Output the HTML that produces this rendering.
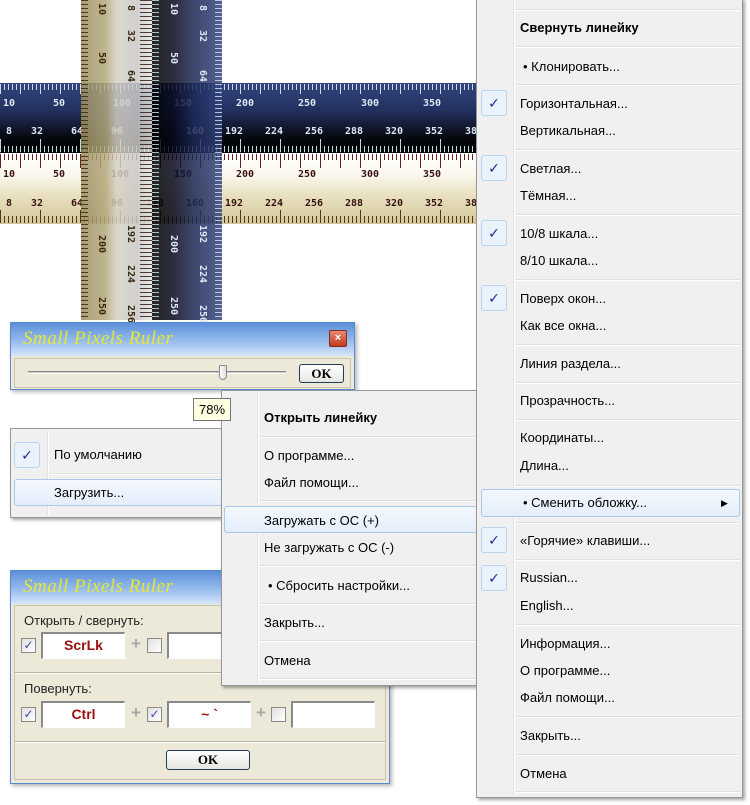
<!DOCTYPE html>
<html><head><meta charset="utf-8"><style>
*{margin:0;padding:0;box-sizing:border-box}
body{width:750px;height:805px;background:#fff;position:relative;overflow:hidden;font-family:"Liberation Sans","DejaVu Sans",sans-serif;font-size:13px;color:#000}
.a{position:absolute}
.menu{position:absolute;background:#f0f0f0;border:1px solid #979797;box-shadow:2px 2px 3px rgba(0,0,0,.35)}
.gut{position:absolute;top:2px;bottom:2px;width:2px;border-left:1px solid #e2e3e3;border-right:1px solid #fff}
.it{position:absolute;white-space:nowrap;line-height:16px}
.sep{position:absolute;height:2px;border-top:1px solid #e0e0e0;border-bottom:1px solid #fff}
.chk{position:absolute;width:26px;height:26px;border:1px solid #b8d4f0;border-radius:3px;background:#eaf2fc;color:#1a2a9a;font-size:14px;text-align:center;line-height:24px}
.hl{position:absolute;height:27px;border:1px solid #a8c8ec;border-radius:3px;background:linear-gradient(#f4f8fd,#e4eefb)}
.num{position:absolute;font-family:"DejaVu Sans Mono",monospace;font-size:10px;font-weight:bold}
.vn{position:absolute;font-family:"DejaVu Sans Mono",monospace;font-size:10px;font-weight:bold;writing-mode:vertical-rl}
.title{position:absolute;left:0;right:0;top:0;height:33px;background:linear-gradient(#5c8fd8,#9cc0ee 60%,#d6e6f8);}
.script{position:absolute;left:12px;top:5px;font-family:"Liberation Serif",serif;font-style:italic;font-size:19px;color:#e6e830;letter-spacing:.5px}
.inp{position:absolute;height:27px;background:#fff;border:1px solid #fff;border-top:2px solid #8a8a8a;border-left:2px solid #8a8a8a;color:#9a1010;font-weight:bold;font-size:14px;text-align:center;line-height:23px}
.cb{position:absolute;width:15px;height:15px;border:1px solid #8a8a8a;background:linear-gradient(135deg,#e0e0e0,#fff);color:#3848a8;font-size:12px;line-height:13px;text-align:center;font-weight:bold}
.plus{position:absolute;color:#a8a8a8;font-weight:bold;font-size:17px}
.btn{position:absolute;border:1px solid #223a5e;border-radius:3px;background:linear-gradient(#fff,#e6e6e0);font-family:"Liberation Serif",serif;font-weight:bold;font-size:13px;text-align:center}
</style></head><body>

<!-- horizontal rulers -->
<div class="a" style="left:0;top:83px;width:476px;height:70px;background:linear-gradient(#33457e,#22305e 40%,#05060c 80%,#000)"></div>
<div class="a" style="left:0;top:84px;width:476px;height:6px;background:repeating-linear-gradient(90deg,#d0d8e8 0 1px,transparent 1px 4px)"></div>
<div class="a" style="left:0;top:84px;width:476px;height:10px;background:repeating-linear-gradient(90deg,#d0d8e8 0 1px,transparent 1px 20px)"></div>
<div class="a" style="left:0;top:146px;width:476px;height:6px;background:repeating-linear-gradient(90deg,#bfe0e0 0 1px,transparent 1px 4px)"></div>
<div class="a" style="left:0;top:139px;width:476px;height:13px;background:repeating-linear-gradient(90deg,#bfe0e0 0 1px,transparent 1px 40px)"></div>
<div class="a" style="left:0;top:153px;width:476px;height:71px;background:linear-gradient(#fff,#fbf8ee 30%,#e8e0c0 60%,#d4c79a)"></div>
<div class="a" style="left:0;top:154px;width:476px;height:6px;background:repeating-linear-gradient(90deg,#6a2020 0 1px,transparent 1px 4px)"></div>
<div class="a" style="left:0;top:154px;width:476px;height:14px;background:repeating-linear-gradient(90deg,#6a2020 0 1px,transparent 1px 20px)"></div>
<div class="a" style="left:0;top:216px;width:476px;height:7px;background:repeating-linear-gradient(90deg,#4a3a10 0 1px,transparent 1px 4px)"></div>
<div class="a" style="left:0;top:210px;width:476px;height:13px;background:repeating-linear-gradient(90deg,#4a3a10 0 1px,transparent 1px 40px)"></div>
<div style="color:#dde6f4">
<span class="num" style="left:3px;top:98px">10</span><span class="num" style="left:53px;top:98px">50</span><span class="num" style="left:113px;top:98px">100</span><span class="num" style="left:174px;top:98px">150</span><span class="num" style="left:236px;top:98px">200</span><span class="num" style="left:298px;top:98px">250</span><span class="num" style="left:361px;top:98px">300</span><span class="num" style="left:423px;top:98px">350</span>
<span class="num" style="left:6px;top:126px">8</span><span class="num" style="left:31px;top:126px">32</span><span class="num" style="left:71px;top:126px">64</span><span class="num" style="left:111px;top:126px">96</span><span class="num" style="left:186px;top:126px">160</span><span class="num" style="left:225px;top:126px">192</span><span class="num" style="left:265px;top:126px">224</span><span class="num" style="left:305px;top:126px">256</span><span class="num" style="left:345px;top:126px">288</span><span class="num" style="left:385px;top:126px">320</span><span class="num" style="left:425px;top:126px">352</span><span class="num" style="left:465px;top:126px">38</span>
</div>
<div style="color:#3a1010">
<span class="num" style="left:3px;top:169px">10</span><span class="num" style="left:53px;top:169px">50</span><span class="num" style="left:111px;top:169px">100</span><span class="num" style="left:174px;top:169px">150</span><span class="num" style="left:236px;top:169px">200</span><span class="num" style="left:298px;top:169px">250</span><span class="num" style="left:361px;top:169px">300</span><span class="num" style="left:423px;top:169px">350</span>
<span class="num" style="left:6px;top:198px">8</span><span class="num" style="left:31px;top:198px">32</span><span class="num" style="left:71px;top:198px">64</span><span class="num" style="left:111px;top:198px">96</span><span class="num" style="left:146px;top:198px">128</span><span class="num" style="left:186px;top:198px">160</span><span class="num" style="left:225px;top:198px">192</span><span class="num" style="left:265px;top:198px">224</span><span class="num" style="left:305px;top:198px">256</span><span class="num" style="left:345px;top:198px">288</span><span class="num" style="left:385px;top:198px">320</span><span class="num" style="left:425px;top:198px">352</span><span class="num" style="left:465px;top:198px">38</span>
</div>

<!-- vertical rulers -->
<div class="a" style="left:81px;top:0;width:71px;height:320px;opacity:.85;background:linear-gradient(90deg,#9a8e62,#b4a87c 35%,#d4d0c4 50%,#c8c8c8 80%,#e6e6e6)"></div>
<div class="a" style="left:140px;top:0;width:12px;height:320px;opacity:.85;background:repeating-linear-gradient(180deg,#3a1a10 0 1px,transparent 1px 4px)"></div>
<div class="a" style="left:81px;top:0;width:7px;height:320px;opacity:.85;background:repeating-linear-gradient(180deg,#3a2a08 0 1px,transparent 1px 4px)"></div>
<div class="a" style="left:152px;top:0;width:70px;height:320px;opacity:.85;background:linear-gradient(90deg,#000,#06081a 30%,#1c2856 60%,#33457e)"></div>
<div class="a" style="left:152px;top:0;width:7px;height:320px;opacity:.85;background:repeating-linear-gradient(180deg,#bfe0e0 0 1px,transparent 1px 4px)"></div>
<div class="a" style="left:215px;top:0;width:7px;height:320px;opacity:.85;background:repeating-linear-gradient(180deg,#d0d8e8 0 1px,transparent 1px 4px)"></div>
<div style="color:#3a2a10">
<span class="vn" style="left:96px;top:3px">10</span><span class="vn" style="left:96px;top:52px">50</span><span class="vn" style="left:96px;top:235px">200</span><span class="vn" style="left:96px;top:297px">250</span>
<span class="vn" style="left:125px;top:5px">8</span><span class="vn" style="left:125px;top:30px">32</span><span class="vn" style="left:125px;top:70px">64</span><span class="vn" style="left:125px;top:225px">192</span><span class="vn" style="left:125px;top:265px">224</span><span class="vn" style="left:125px;top:305px">256</span>
</div>
<div style="color:#dde6f4">
<span class="vn" style="left:168px;top:3px">10</span><span class="vn" style="left:168px;top:52px">50</span><span class="vn" style="left:168px;top:235px">200</span><span class="vn" style="left:168px;top:297px">250</span>
<span class="vn" style="left:197px;top:5px">8</span><span class="vn" style="left:197px;top:30px">32</span><span class="vn" style="left:197px;top:70px">64</span><span class="vn" style="left:197px;top:225px">192</span><span class="vn" style="left:197px;top:265px">224</span><span class="vn" style="left:197px;top:305px">256</span>
</div>

<!-- dialog 1 -->
<div class="a" style="left:10px;top:322px;width:345px;height:68px;border:1px solid #5a8ad0;background:#ece9d8;box-shadow:2px 2px 4px rgba(0,0,0,.3)">
 <div class="title"><span class="script">Small Pixels Ruler</span>
  <div class="a" style="left:318px;top:7px;width:18px;height:17px;border:1px solid #8a2a1a;border-radius:2px;background:linear-gradient(#e88a70,#c03a20);color:#fff;font-size:11px;text-align:center;line-height:14px;font-weight:bold">×</div></div>
 <div class="a" style="left:3px;top:35px;right:3px;height:30px;border:1px solid #c8c4b0;background:#ece9d8"></div>
 <div class="a" style="left:17px;top:48px;width:258px;height:3px;border-top:1px solid #888;border-bottom:1px solid #fff;background:#ccc"></div>
 <div class="a" style="left:208px;top:42px;width:8px;height:15px;background:linear-gradient(90deg,#fff,#ddd);border:1px solid #888;border-radius:1px 1px 4px 4px"></div>
 <div class="btn" style="left:288px;top:41px;width:45px;height:19px;line-height:17px">OK</div>
</div>

<!-- left menu -->
<div class="menu" style="left:10px;top:428px;width:220px;height:90px">
 <div class="gut" style="left:36px"></div>
 <div class="chk" style="left:3px;top:13px">✓</div>
 <div class="it" style="left:43px;top:18px">По умолчанию</div>
 <div class="sep" style="left:38px;right:0;top:44px"></div>
 <div class="hl" style="left:3px;top:50px;width:220px"></div>
 <div class="it" style="left:43px;top:56px">Загрузить...</div>
</div>

<!-- dialog 2 -->
<div class="a" style="left:10px;top:570px;width:380px;height:214px;border:1px solid #5a8ad0;background:#ece9d8;box-shadow:2px 2px 4px rgba(0,0,0,.3)">
 <div class="title"><span class="script">Small Pixels Ruler</span></div>
 <div class="a" style="left:3px;top:34px;right:3px;bottom:3px;border:1px solid #c8c4b0"></div>
 <div class="it" style="left:13px;top:42px;color:#222">Открыть / свернуть:</div>
 <div class="cb" style="left:10px;top:67px">✓</div>
 <div class="inp" style="left:30px;top:61px;width:84px">ScrLk</div>
 <div class="plus" style="left:120px;top:63px">+</div>
 <div class="cb" style="left:136px;top:67px"></div>
 <div class="inp" style="left:156px;top:61px;width:84px"></div>
 <div class="a" style="left:4px;right:4px;top:101px;height:2px;border-top:1px solid #b8b4a0;border-bottom:1px solid #fff"></div>
 <div class="it" style="left:13px;top:110px;color:#222">Повернуть:</div>
 <div class="cb" style="left:10px;top:136px">✓</div>
 <div class="inp" style="left:30px;top:130px;width:84px">Ctrl</div>
 <div class="plus" style="left:120px;top:132px">+</div>
 <div class="cb" style="left:136px;top:136px">✓</div>
 <div class="inp" style="left:156px;top:130px;width:84px">~ `</div>
 <div class="plus" style="left:245px;top:132px">+</div>
 <div class="cb" style="left:260px;top:136px"></div>
 <div class="inp" style="left:280px;top:130px;width:84px"></div>
 <div class="a" style="left:4px;right:4px;top:170px;height:2px;border-top:1px solid #b8b4a0;border-bottom:1px solid #fff"></div>
 <div class="btn" style="left:155px;top:179px;width:84px;height:20px;line-height:18px">OK</div>
</div>

<!-- middle menu -->
<div class="menu" style="left:221px;top:390px;width:262px;height:296px">
 <div class="gut" style="left:35px"></div>
 <div class="it" style="left:42px;top:19px;font-weight:bold">Открыть линейку</div>
 <div class="sep" style="left:37px;right:0;top:45px"></div>
 <div class="it" style="left:42px;top:57px">О программе...</div>
 <div class="it" style="left:42px;top:84px">Файл помощи...</div>
 <div class="sep" style="left:37px;right:0;top:109px"></div>
 <div class="hl" style="left:2px;top:115px;width:260px"></div>
 <div class="it" style="left:42px;top:122px">Загружать с ОС (+)</div>
 <div class="it" style="left:42px;top:149px">Не загружать с ОС (-)</div>
 <div class="sep" style="left:37px;right:0;top:174px"></div>
 <div class="it" style="left:46px;top:187px">• Сбросить настройки...</div>
 <div class="sep" style="left:37px;right:0;top:212px"></div>
 <div class="it" style="left:42px;top:224px">Закрыть...</div>
 <div class="sep" style="left:37px;right:0;top:249px"></div>
 <div class="it" style="left:42px;top:262px">Отмена</div>
 <div class="sep" style="left:37px;right:0;top:287px"></div>
</div>

<!-- tooltip -->
<div class="a" style="left:193px;top:398px;width:38px;height:23px;border:1px solid #767676;background:#ffffe1;text-align:center;line-height:21px;font-size:13px">78%</div>

<!-- right menu -->
<div class="menu" style="left:476px;top:-2px;width:267px;height:800px">
 <div class="gut" style="left:36px"></div>
 <div class="sep" style="left:38px;right:2px;top:10px"></div>
 <div class="it" style="left:43px;top:21px;font-weight:bold">Свернуть линейку</div>
 <div class="sep" style="left:38px;right:2px;top:47px"></div>
 <div class="it" style="left:46px;top:60px">• Клонировать...</div>
 <div class="sep" style="left:38px;right:2px;top:85px"></div>
 <div class="chk" style="left:4px;top:91px">✓</div>
 <div class="it" style="left:43px;top:97px">Горизонтальная...</div>
 <div class="it" style="left:43px;top:124px">Вертикальная...</div>
 <div class="sep" style="left:38px;right:2px;top:150px"></div>
 <div class="chk" style="left:4px;top:156px">✓</div>
 <div class="it" style="left:43px;top:162px">Светлая...</div>
 <div class="it" style="left:43px;top:189px">Тёмная...</div>
 <div class="sep" style="left:38px;right:2px;top:215px"></div>
 <div class="chk" style="left:4px;top:221px">✓</div>
 <div class="it" style="left:43px;top:227px">10/8 шкала...</div>
 <div class="it" style="left:43px;top:254px">8/10 шкала...</div>
 <div class="sep" style="left:38px;right:2px;top:280px"></div>
 <div class="chk" style="left:4px;top:286px">✓</div>
 <div class="it" style="left:43px;top:292px">Поверх окон...</div>
 <div class="it" style="left:43px;top:319px">Как все окна...</div>
 <div class="sep" style="left:38px;right:2px;top:345px"></div>
 <div class="it" style="left:43px;top:357px">Линия раздела...</div>
 <div class="sep" style="left:38px;right:2px;top:383px"></div>
 <div class="it" style="left:43px;top:394px">Прозрачность...</div>
 <div class="sep" style="left:38px;right:2px;top:420px"></div>
 <div class="it" style="left:43px;top:431px">Координаты...</div>
 <div class="it" style="left:43px;top:459px">Длина...</div>
 <div class="sep" style="left:38px;right:2px;top:486px"></div>
 <div class="hl" style="left:4px;top:490px;width:259px;height:28px"></div>
 <div class="it" style="left:46px;top:496px">• Сменить обложку...</div>
 <div class="it" style="left:244px;top:496px;font-size:9px">▶</div>
 <div class="sep" style="left:38px;right:2px;top:523px"></div>
 <div class="chk" style="left:4px;top:528px">✓</div>
 <div class="it" style="left:43px;top:534px">«Горячие» клавиши...</div>
 <div class="sep" style="left:38px;right:2px;top:560px"></div>
 <div class="chk" style="left:4px;top:566px">✓</div>
 <div class="it" style="left:43px;top:571px">Russian...</div>
 <div class="it" style="left:43px;top:599px">English...</div>
 <div class="sep" style="left:38px;right:2px;top:625px"></div>
 <div class="it" style="left:43px;top:637px">Информация...</div>
 <div class="it" style="left:43px;top:664px">О программе...</div>
 <div class="it" style="left:43px;top:691px">Файл помощи...</div>
 <div class="sep" style="left:38px;right:2px;top:717px"></div>
 <div class="it" style="left:43px;top:729px">Закрыть...</div>
 <div class="sep" style="left:38px;right:2px;top:755px"></div>
 <div class="it" style="left:43px;top:767px">Отмена</div>
 <div class="sep" style="left:38px;right:2px;top:792px"></div>
</div>
</body></html>
